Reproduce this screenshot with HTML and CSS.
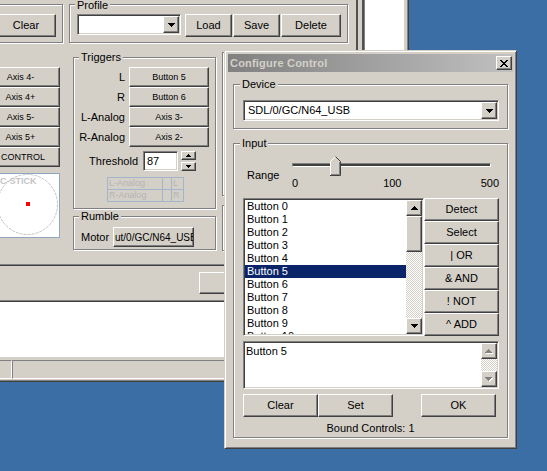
FILE: index.html
```html
<!DOCTYPE html>
<html>
<head>
<meta charset="utf-8">
<title>Configure Control</title>
<link rel="stylesheet" href="styles.css">
</head>
<body>
<div class="desktop">
  <div class="bgwin">
    <div class="bgbody">
      <div class="bgmain">
        <div class="row-top">
          <div class="group g-clear">
            <div class="btn btn-clear">Clear</div>
          </div>
          <div class="group g-profile">
            <div class="glabel">Profile</div>
            <div class="profile-row">
              <div class="sunken combo combo-profile">
                <span class="combo-text"></span>
                <span class="btn combo-btn"><svg width="7" height="4" viewBox="0 0 7 4"><path d="M0 0h7v1h-1v1h-1v1h-1v1h-1v-1h-1v-1h-1v-1h-1z"/></svg></span>
              </div>
              <div class="btn b-load">Load</div>
              <div class="btn b-save">Save</div>
              <div class="btn b-delete">Delete</div>
            </div>
          </div>
        </div>
        <div class="row-mid">
          <div class="col-axes">
            <div class="btn sbtn">Axis 4-</div>
            <div class="btn sbtn">Axis 4+</div>
            <div class="btn sbtn">Axis 5-</div>
            <div class="btn sbtn">Axis 5+</div>
            <div class="btn sbtn axis-control">CONTROL</div>
            <div class="stick">
              <svg width="63" height="63" viewBox="0 0 63 63">
                <circle cx="31.5" cy="30.5" r="30" fill="none" stroke="#c4c4c4" stroke-dasharray="3 1"/>
                <rect x="30" y="28" width="4" height="4" fill="#ff0000"/>
                <text x="4" y="9.5" class="stick-text">C-STICK</text>
              </svg>
            </div>
          </div>
          <div class="col-trig">
            <div class="group g-trig">
              <div class="glabel">Triggers</div>
              <div class="trig-grid">
                <span class="tlabel">L</span><div class="btn sbtn">Button 5</div>
                <span class="tlabel">R</span><div class="btn sbtn">Button 6</div>
                <span class="tlabel">L-Analog</span><div class="btn sbtn">Axis 3-</div>
                <span class="tlabel">R-Analog</span><div class="btn sbtn">Axis 2-</div>
              </div>
              <div class="thresh-row">
                <span class="thresh-label">Threshold</span>
                <div class="sunken spinbox">87</div>
                <div class="spin">
                  <div class="btn spin-btn"><svg width="5" height="3" viewBox="0 0 5 3"><path d="M2 0h1v1h1v1h1v1h-5v-1h1v-1h1z"/></svg></div>
                  <div class="btn spin-btn"><svg width="5" height="3" viewBox="0 0 5 3"><path d="M0 0h5v1h-1v1h-1v1h-1v-1h-1v-1h-1z"/></svg></div>
                </div>
              </div>
              <div class="mini">
                <span>L-Analog</span><span></span><span>L</span>
                <span>R-Analog</span><span></span><span>R</span>
              </div>
            </div>
            <div class="group g-rumble">
              <div class="glabel">Rumble</div>
              <div class="rumble-row">
                <span class="motor-label">Motor</span>
                <div class="btn motor-btn">ut/0/GC/N64_USB</div>
              </div>
            </div>
          </div>
          <div class="col-right">
            <div class="group g-r1"></div>
            <div class="group g-r2"></div>
          </div>
        </div>
        <div class="row-bottom">
          <div class="sep"></div>
          <div class="btn b-close"></div>
        </div>
      </div>
      <div class="sidepanel">
        <div class="sash"></div>
        <div class="sidewhite"></div>
      </div>
    </div>
    <div class="logarea"></div>
    <div class="statusbar">
      <div class="pane p1"></div>
      <div class="pane p2"></div>
    </div>
  </div>

  <div class="dialog">
    <div class="titlebar">
      <span class="title-text">Configure Control</span>
      <div class="btn close">
        <svg width="8" height="7" viewBox="0 0 8 7"><path d="M0 0h2v1h-2zM6 0h2v1h-2zM1 1h2v1h-2zM5 1h2v1h-2zM2 2h4v1h-4zM3 3h2v1h-2zM2 4h4v1h-4zM1 5h2v1h-2zM5 5h2v1h-2zM0 6h2v1h-2zM6 6h2v1h-2z"/></svg>
      </div>
    </div>
    <div class="dbody">
      <div class="group g-device">
        <div class="glabel">Device</div>
        <div class="sunken combo combo-device">
          <span class="combo-text">SDL/0/GC/N64_USB</span>
          <span class="btn combo-btn"><svg width="7" height="4" viewBox="0 0 7 4"><path d="M0 0h7v1h-1v1h-1v1h-1v1h-1v-1h-1v-1h-1v-1h-1z"/></svg></span>
        </div>
      </div>
      <div class="group g-input">
        <div class="glabel">Input</div>
        <div class="slider-row">
          <span class="range-label">Range</span>
          <div class="slider">
            <div class="track"></div>
            <svg class="thumb" width="11" height="20" viewBox="0 0 11 20">
              <path d="M0.5 19.5V5.5L5.5 0.5L10.5 5.5V19.5Z" fill="#d4d0c8"/>
              <path d="M0.5 19V5.5L5.5 0.5" fill="none" stroke="#fff"/>
              <path d="M5.5 0.5L10.5 5.5V19.5H0" fill="none" stroke="#404040"/>
              <path d="M9.5 6V18.5H1" fill="none" stroke="#808080"/>
            </svg>
            <div class="ticks">
              <span>0</span>
              <span class="t100">100</span>
              <span class="t500">500</span>
            </div>
          </div>
        </div>
        <div class="list-row">
          <div class="sunken listbox">
            <div class="items">
              <div class="item">Button 0</div>
              <div class="item">Button 1</div>
              <div class="item">Button 2</div>
              <div class="item">Button 3</div>
              <div class="item">Button 4</div>
              <div class="item sel">Button 5</div>
              <div class="item">Button 6</div>
              <div class="item">Button 7</div>
              <div class="item">Button 8</div>
              <div class="item">Button 9</div>
              <div class="item">Button 10</div>
            </div>
            <div class="vscroll">
              <div class="btn sb-btn"><svg width="7" height="4" viewBox="0 0 7 4"><path d="M3 0h1v1h1v1h1v1h1v1h-7v-1h1v-1h1v-1h1z"/></svg></div>
              <div class="btn sb-thumb"></div>
              <div class="sb-track"></div>
              <div class="btn sb-btn"><svg width="7" height="4" viewBox="0 0 7 4"><path d="M0 0h7v1h-1v1h-1v1h-1v1h-1v-1h-1v-1h-1v-1h-1z"/></svg></div>
            </div>
          </div>
          <div class="btn-col">
            <div class="btn">Detect</div>
            <div class="btn">Select</div>
            <div class="btn">| OR</div>
            <div class="btn">&amp; AND</div>
            <div class="btn">! NOT</div>
            <div class="btn">^ ADD</div>
          </div>
        </div>
        <div class="sunken textbox">
          <div class="tb-text">Button 5</div>
          <div class="vscroll">
            <div class="btn sb-btn"><svg width="8" height="5" viewBox="0 0 8 5"><path fill="#fff" d="M4 1h1v1h1v1h1v1h1v1h-7v-1h1v-1h1v-1h1z"/><path fill="#808080" d="M3 0h1v1h1v1h1v1h1v1h-7v-1h1v-1h1v-1h1z"/></svg></div>
            <div class="sb-track"></div>
            <div class="btn sb-btn"><svg width="8" height="5" viewBox="0 0 8 5"><path fill="#fff" d="M1 1h7v1h-1v1h-1v1h-1v1h-1v-1h-1v-1h-1v-1h-1z"/><path fill="#808080" d="M0 0h7v1h-1v1h-1v1h-1v1h-1v-1h-1v-1h-1v-1h-1z"/></svg></div>
          </div>
        </div>
        <div class="btn-row">
          <div class="btn">Clear</div>
          <div class="btn">Set</div>
          <div class="btn b-ok">OK</div>
        </div>
        <div class="bound">Bound Controls: 1</div>
      </div>
    </div>
  </div>
</div>
</body>
</html>
```

FILE: styles.css
```css
* { box-sizing: border-box; }
body { margin: 0; }

.desktop {
  position: relative;
  width: 547px;
  height: 471px;
  overflow: hidden;
  background: #3a6ea5;
  font-family: "Liberation Sans", Arial, sans-serif;
  font-size: 11px;
  color: #000;
}

/* ---------- shared classic widgets ---------- */
.group {
  border: 1px solid #808080;
  box-shadow: inset 1px 1px 0 #fff, 1px 1px 0 #fff;
}
.glabel {
  width: max-content;
  height: 13px;
  line-height: 13px;
  margin: -7px 0 0 5px;
  padding: 0 2px;
  background: #d4d0c8;
}
.btn {
  display: flex;
  align-items: center;
  justify-content: center;
  background: #d4d0c8;
  border: 1px solid;
  border-color: #fff #404040 #404040 #fff;
  box-shadow: inset -1px -1px 0 #808080;
  white-space: nowrap;
  line-height: 13px;
}
.btn svg { display: block; flex: none; }
.sunken {
  border: 1px solid;
  border-color: #808080 #fff #fff #808080;
  box-shadow: inset 1px 1px 0 #404040, inset -1px -1px 0 #d4d0c8;
  padding: 1px;
  background: #fff;
}
.combo { display: flex; }
.combo-text { flex: 1; padding-left: 2px; line-height: 17px; white-space: nowrap; overflow: hidden; }
.combo-btn { width: 16px; flex: none; }

/* ---------- background window ---------- */
.bgwin {
  position: absolute;
  left: -30px;
  top: 0;
  width: 439px;
  height: 382px;
  background: #d4d0c8;
  border-right: 1px solid #404040;
  border-bottom: 1px solid #404040;
  padding: 0 1px 1px 0;
  box-shadow: inset -1px -1px 0 #808080;
  display: flex;
  flex-direction: column;
}
.bgbody { display: flex; height: 300px; flex: none; }
.bgmain { width: 379px; display: flex; flex-direction: column; flex: none; }
.sidepanel { flex: 1; display: flex; padding-left: 7px; }
.sash { width: 8px; border-left: 2px solid #505050; border-right: 2px solid #505050; }
.sidewhite { width: 40px; background: #fff; border-left: 1px solid #808080; }

.row-top { display: flex; align-items: flex-start; height: 43px; padding-top: 4px; flex: none; }
.g-clear { margin-left: 4px; width: 89px; height: 39px; }
.btn-clear { margin: 9px 0 0 21px; width: 60px; height: 23px; }
.g-profile { margin-left: 6px; width: 279px; height: 39px; }
.g-profile .glabel { height: 9px; line-height: 9px; margin-top: -4px; }
.profile-row { display: flex; align-items: flex-start; margin: 4px 0 0 7px; }
.combo-profile { width: 104px; height: 21px; }
.b-load { margin-left: 4px; width: 47px; height: 23px; }
.b-save { margin-left: 1px; width: 47px; height: 23px; }
.b-delete { margin-left: 1px; width: 60px; height: 23px; }

.row-mid { display: flex; align-items: flex-start; height: 208px; flex: none; }
.col-axes { margin: 24px 0 0 11px; width: 79px; display: flex; flex-direction: column; }
.sbtn { height: 20px; font-size: 9px; }
.axis-control { padding-left: 5px; }
.stick {
  margin: 6px 0 0 auto;
  width: 65px;
  height: 65px;
  border: 1px solid #8fa6c2;
  background: #fff;
}
.stick svg { display: block; }
.stick-text { font-family: "Liberation Sans", Arial, sans-serif; font-size: 9px; font-weight: bold; fill: #c4c4c4; }

.col-trig { margin: 14px 0 0 13px; width: 143px; }
.g-trig { height: 152px; }
.trig-grid {
  display: grid;
  grid-template-columns: 51px 80px;
  grid-auto-rows: 20px;
  column-gap: 4px;
  margin-top: 3px;
}
.tlabel { text-align: right; line-height: 20px; white-space: nowrap; }
.thresh-row { display: flex; height: 20px; margin-top: 4px; }
.thresh-label { width: 64px; margin-right: 5px; text-align: right; line-height: 20px; }
.spinbox { width: 35px; height: 20px; padding-left: 3px; line-height: 16px; }
.spin { margin-left: 3px; width: 15px; display: flex; flex-direction: column; justify-content: space-between; }
.spin-btn { height: 9px; }
.mini {
  display: grid;
  grid-template-columns: 54px 8px 11px;
  grid-template-rows: 11px 11px;
  gap: 1px;
  width: 77px;
  height: 25px;
  margin: 6px 0 0 33px;
  border: 1px solid #a3b5cc;
  background: #a3b5cc;
}
.mini span {
  background: #d4d0c8;
  color: #b4b4b4;
  font-size: 9px;
  line-height: 11px;
  padding-left: 1px;
  overflow: hidden;
  white-space: nowrap;
}
.g-rumble { margin-top: 7px; height: 34px; }
.rumble-row { display: flex; align-items: center; margin: 4px 0 0 7px; }
.motor-label { width: 32px; }
.motor-btn {
  width: 81px;
  height: 20px;
  justify-content: flex-start;
  overflow: hidden;
  padding-left: 1px;
  font-size: 10px;
}
.col-right { margin: 9px 0 0 6px; width: 120px; }
.g-r1 { height: 144px; }
.g-r2 { margin-top: 9px; height: 46px; }

.row-bottom { height: 49px; flex: none; }
.sep { margin-top: 13px; height: 2px; border-top: 1px solid #808080; border-bottom: 1px solid #404040; }
.b-close { margin: 6px 0 0 229px; width: 75px; height: 22px; }

.logarea {
  height: 58px;
  flex: none;
  background: #fff;
  border-top: 1px solid #808080;
  border-bottom: 1px solid #d4d0c8;
  box-shadow: inset 0 1px 0 #404040;
}
.statusbar { height: 22px; flex: none; display: flex; padding-top: 2px; }
.pane {
  height: 19px;
  border: 1px solid;
  border-color: #808080 #fff #fff #808080;
}
.p1 { width: 42px; }
.p2 { flex: 1; }

/* ---------- dialog ---------- */
.dialog {
  position: absolute;
  left: 224px;
  top: 50px;
  width: 293px;
  height: 399px;
  background: #d4d0c8;
  border: 1px solid;
  border-color: #d4d0c8 #404040 #404040 #d4d0c8;
  box-shadow: inset 1px 1px 0 #fff, inset -1px -1px 0 #808080;
  padding: 3px;
  display: flex;
  flex-direction: column;
}
.titlebar {
  height: 18px;
  flex: none;
  display: flex;
  align-items: center;
  padding-left: 2px;
  background: linear-gradient(to right, #808080, #c0c0c0);
  color: #d4d0c8;
  font-weight: bold;
  letter-spacing: 0.2px;
}
.close { margin-left: auto; margin-right: 1px; width: 16px; height: 14px; }
.dbody { padding-left: 5px; }
.dialog .glabel { margin-left: 6px; }
.g-device { margin-top: 12px; width: 275px; height: 45px; }
.combo-device { margin: 9px 0 0 9px; width: 256px; height: 21px; }
.combo-device .combo-text { padding-left: 3px; }
.g-input { margin-top: 14px; width: 275px; height: 295px; }

.slider-row { display: flex; height: 40px; }
.range-label { margin: 19px 0 0 13px; width: 45px; height: 13px; line-height: 13px; }
.slider { position: relative; width: 207px; }
.track {
  margin-top: 13px;
  width: 199px;
  height: 4px;
  background: #404040;
  border-top: 1px solid #808080;
  border-left: 1px solid #808080;
  border-bottom: 1px solid #fff;
  border-right: 1px solid #fff;
}
.thumb { position: absolute; left: 38px; top: 6px; display: block; }
.ticks { display: flex; margin-top: 10px; line-height: 13px; }
.t100 { margin-left: 85px; }
.t500 { margin-left: auto; }

.list-row { display: flex; margin: 8px 0 0 9px; }
.listbox { width: 181px; height: 138px; display: flex; }
.items { flex: 1; overflow: hidden; }
.item { height: 13px; line-height: 13px; padding-left: 2px; white-space: nowrap; }
.item.sel { background: #0a246a; color: #fff; }
.vscroll { width: 16px; flex: none; display: flex; flex-direction: column; }
.sb-btn { height: 16px; flex: none; }
.sb-thumb { height: 36px; flex: none; }
.sb-track {
  flex: 1;
  background-image: conic-gradient(#fff 0 25%, #d4d0c8 0 50%, #fff 0 75%, #d4d0c8 0);
  background-size: 2px 2px;
}
.btn-col { width: 75px; display: flex; flex-direction: column; }
.btn-col .btn { height: 23px; }

.textbox { margin: 5px 0 0 9px; width: 256px; height: 48px; display: flex; }
.tb-text { flex: 1; padding: 2px 0 0 1px; line-height: 13px; }

.btn-row { display: flex; margin: 5px 0 0 9px; }
.btn-row .btn { width: 75px; height: 23px; }
.btn-row .b-ok { margin-left: 28px; }
.bound { margin-top: 5px; line-height: 13px; text-align: center; }
```
